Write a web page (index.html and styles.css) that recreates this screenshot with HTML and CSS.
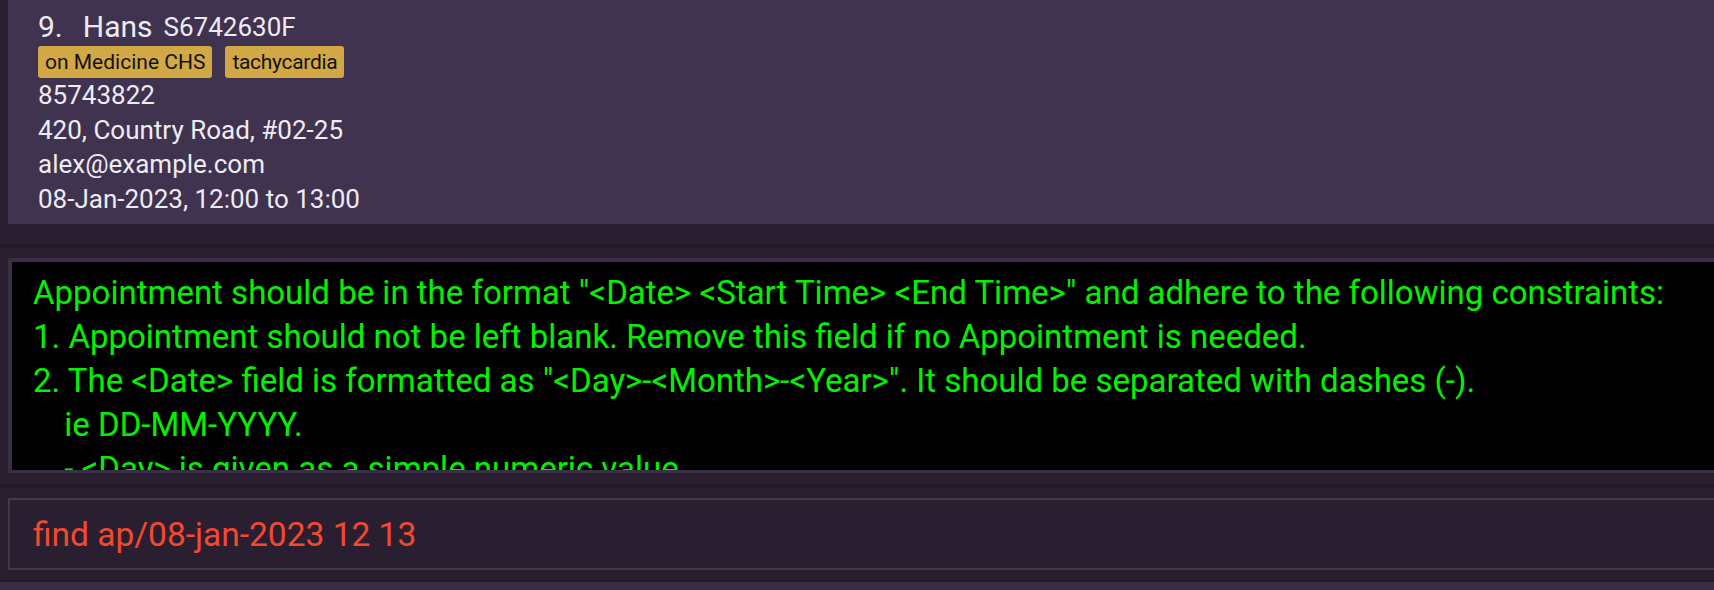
FILE: index.html
```html
<!DOCTYPE html>
<html lang="en">
<head>
<meta charset="utf-8">
<title>Patient list</title>
<link rel="stylesheet" href="styles.css">
</head>
<body>
<div class="app">
  <section class="list-pane">
    <div class="card">
      <div class="name-row">
        <span class="index">9.</span>
        <span class="name">Hans</span>
        <span class="nric">S6742630F</span>
      </div>
      <div class="tags">
        <span class="tag">on Medicine CHS</span>
        <span class="tag">tachycardia</span>
      </div>
      <div class="info">85743822</div>
      <div class="info">420, Country Road, #02-25</div>
      <div class="info">alex@example.com</div>
      <div class="info">08-Jan-2023, 12:00 to 13:00</div>
    </div>
  </section>
  <div class="divider"></div>
  <section class="result-pane">
    <div class="result-box"><div class="result-text">Appointment should be in the format "&lt;Date&gt; &lt;Start Time&gt; &lt;End Time&gt;" and adhere to the following constraints:
1. Appointment should not be left blank. Remove this field if no Appointment is needed.
2. The &lt;Date&gt; field is formatted as "&lt;Day&gt;-&lt;Month&gt;-&lt;Year&gt;". It should be separated with dashes (-).
   &#8201;ie DD-MM-YYYY.
   &#8201;- &lt;Day&gt; is given as a simple numeric value.</div></div>
  </section>
  <div class="divider"></div>
  <section class="command-pane">
    <div class="command-box"><span class="command-text">find ap/08-jan-2023 12 13</span></div>
  </section>
  <div class="divider thin"></div>
  <footer class="status-bar"></footer>
</div>
</body>
</html>
```

FILE: styles.css
```css
html, body {
  margin: 0;
  padding: 0;
  height: 590px;
  overflow: hidden;
  background: #2a1f31;
  font-family: Roboto, "Liberation Sans", sans-serif;
}

.app {
  display: flex;
  flex-direction: column;
  height: 590px;
}

.list-pane {
  padding: 0 0 20px 8px;
}

.card {
  background: #403350;
  color: #efebf2;
  height: 224px;
  box-sizing: border-box;
  padding: 9px 0 0 30px;
}

.name-row {
  display: flex;
  align-items: center;
  height: 35px;
  font-size: 30px;
}

.index {
  margin-right: 20px;
}

.nric {
  font-size: 26px;
  margin-left: 11px;
}

.tags {
  display: flex;
  gap: 13px;
  margin-top: 2px;
}

.tag {
  background: #d1a844;
  color: #141014;
  font-size: 21px;
  height: 32px;
  line-height: 32px;
  padding: 0 7px;
  border-radius: 3px;
}

.tag + .tag {
  letter-spacing: -0.3px;
}

.info {
  font-size: 26px;
  line-height: 34.5px;
}

.divider {
  height: 4px;
  background: #211a27;
  flex: none;
}

.divider.thin {
  height: 2px;
}

.result-pane {
  padding: 10px 0 11px 8px;
}

.result-box {
  background: #000;
  border-style: solid;
  border-color: #3a3046;
  border-width: 4px 0 3px 4px;
  height: 208px;
  overflow: hidden;
}

.result-text {
  color: #00f200;
  font-size: 33px;
  line-height: 44px;
  padding: 9px 0 0 21px;
  white-space: pre;
}

.command-pane {
  padding: 10px 0 10px 8px;
}

.command-box {
  border-style: solid;
  border-color: #3d3d3d;
  border-width: 2px 0 2px 2px;
  height: 68px;
  display: flex;
  align-items: center;
  padding-left: 23px;
}

.command-text {
  color: #f2492f;
  font-size: 33.5px;
}

.status-bar {
  flex: 1;
  background: #3a2c45;
}
```
